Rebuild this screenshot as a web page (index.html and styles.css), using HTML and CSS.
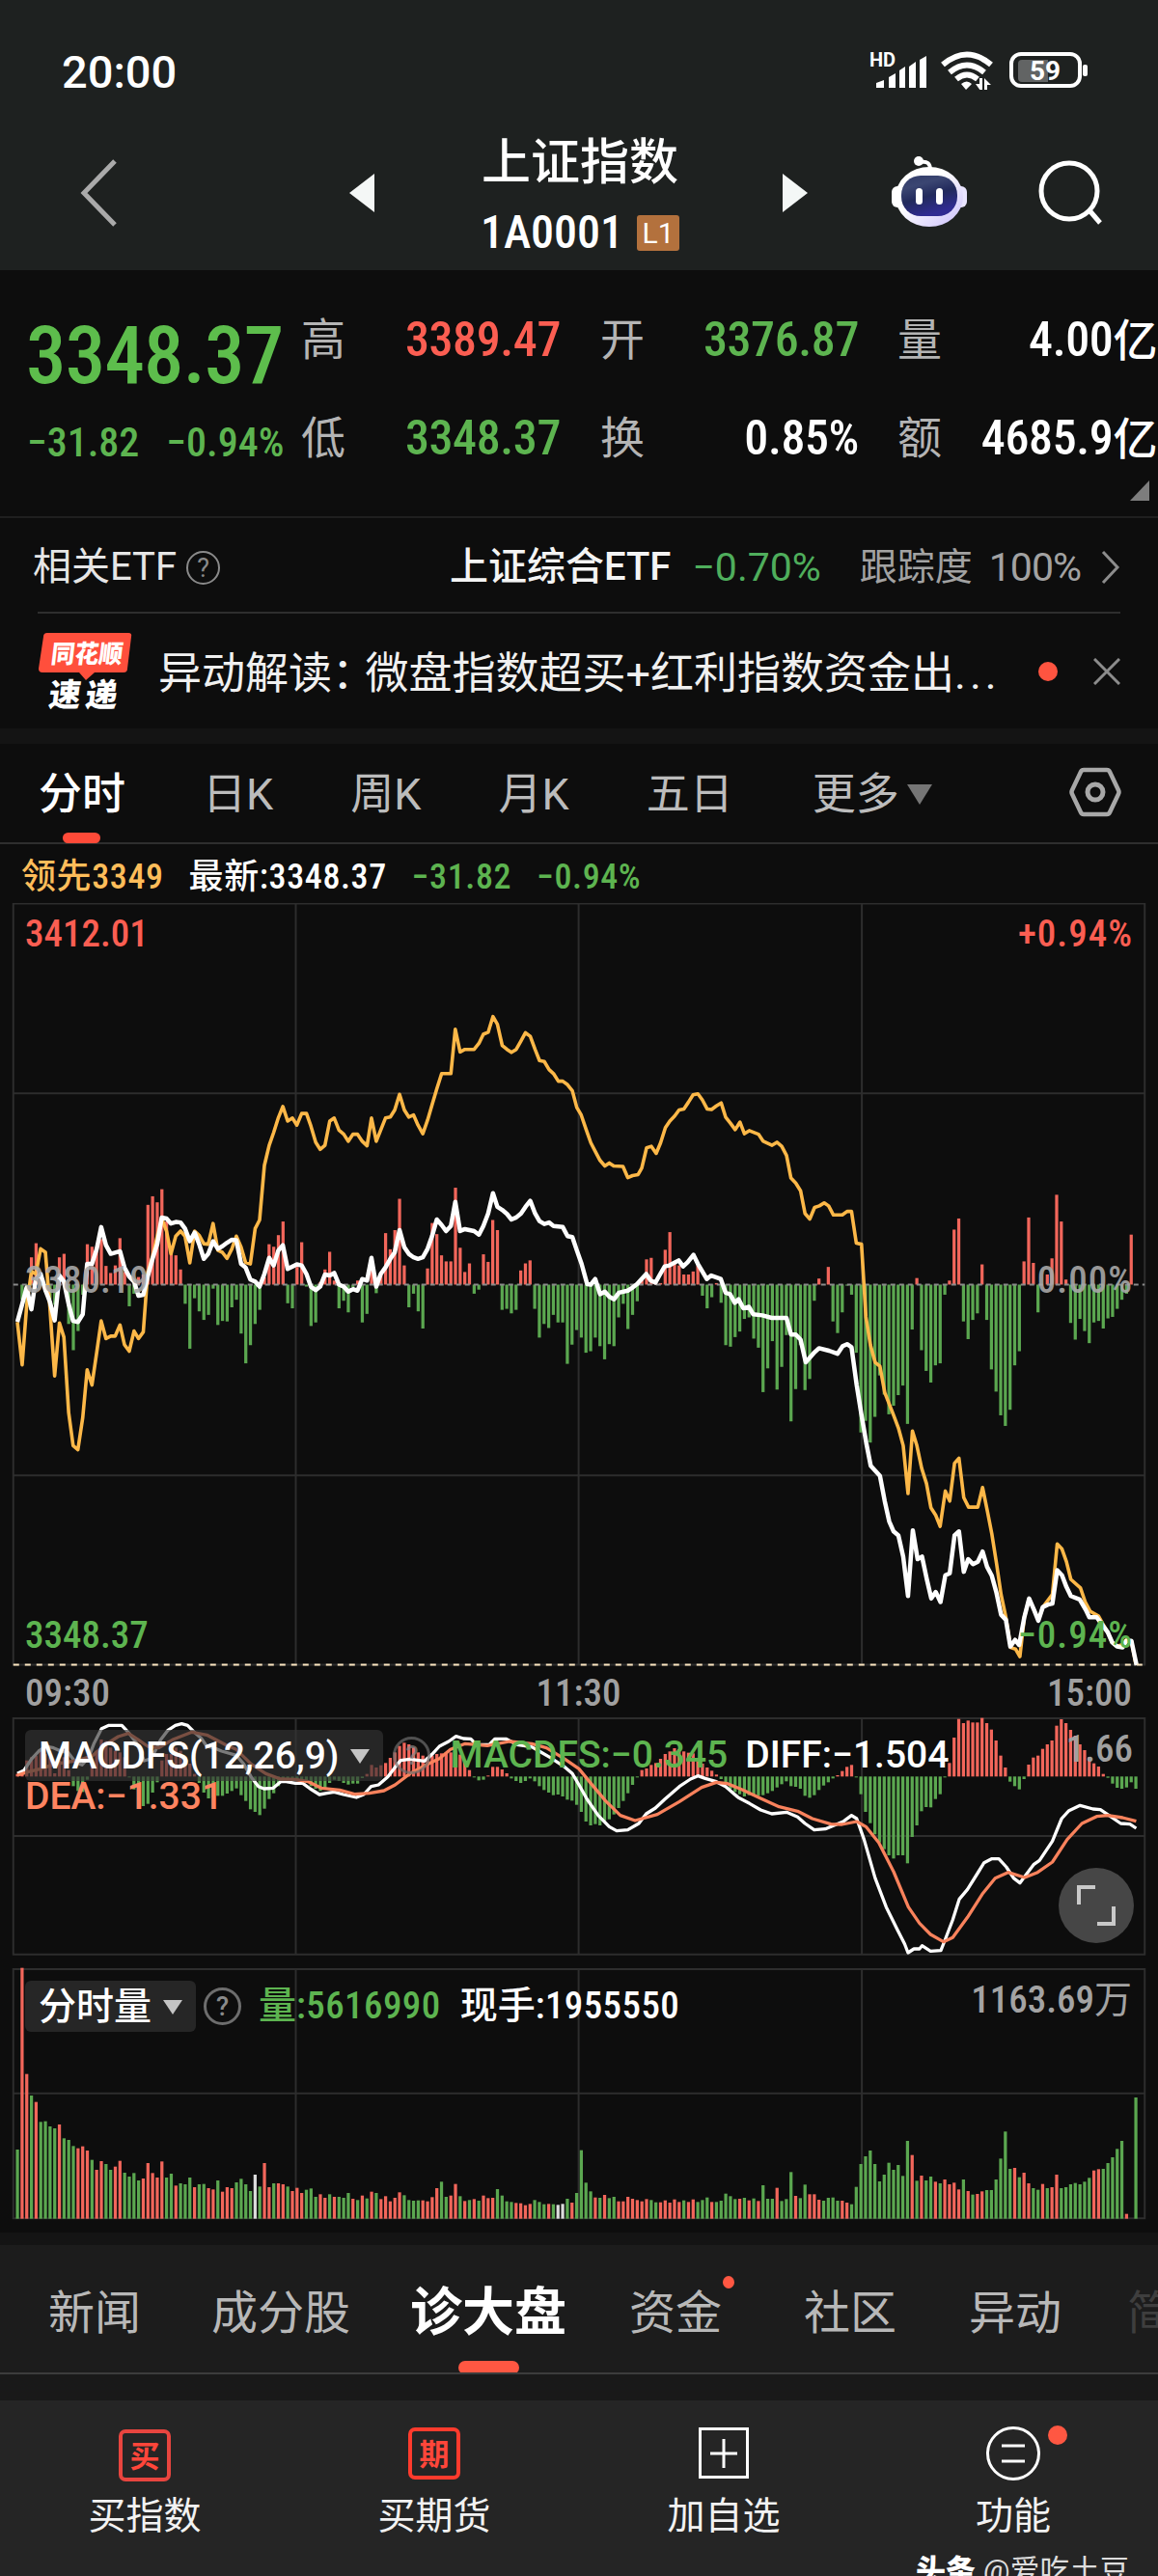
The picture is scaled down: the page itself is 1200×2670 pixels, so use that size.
FILE: index.html
```html
<!DOCTYPE html>
<html lang="zh-CN">
<head>
    <meta charset="UTF-8">
    <meta name="viewport" content="width=device-width, initial-scale=1.0">
    <title>上证指数 1A0001</title>
    <link rel="stylesheet" href="styles.css">
</head>
<body>
    <div class="top">
        <div class="status">
            <span class="clock">20:00</span>
            <svg class="status-icons" width="240" height="50" viewBox="0 0 240 50">
                <text x="11" y="26" class="hd">HD</text>
                <g fill="#fff">
                    <path d="M18 49v-5l8-3v8zM31 49V38l7-4v15zM42 49V31l6-4v22zM52 49V27l7-5v27zM63 49V20l7-4v33z" transform="translate(0 -1)"/>
                </g>
                <g fill="none" stroke="#fff" stroke-width="6">
                    <path d="M87 24Q112 3 137 24"/>
                    <path d="M94 32Q112 17 130 32"/>
                    <path d="M101 39Q112 30 123 39"/>
                </g>
                <path d="M106 44q6-5 11 0l-6 6zM121 44h4v-6h3v13h-2zM130 38l7 7h-4v5h-3z" fill="#fff"/>
                <rect x="158" y="13" width="71" height="33" rx="10" fill="none" stroke="#fff" stroke-width="4"/>
                <path d="M169 19h27v23h-27q-4 0-4-4V23q0-4 4-4z" fill="#626464"/>
                <rect x="232" y="24" width="5" height="12" rx="2" fill="#fff"/>
                <text x="193" y="40" class="battery-text" text-anchor="middle">59</text>
            </svg>
        </div>
        <div class="header">
            <svg class="back" width="40" height="70" viewBox="0 0 40 70"><path d="M36 2L4 35l32 33" fill="none" stroke="#aaa" stroke-width="5"/></svg>
            <svg class="prev" width="26" height="40" viewBox="0 0 26 40"><path d="M26 0v40L0 20z" fill="#f4f7f6"/></svg>
            <div class="title">
                <div class="title-name">上证指数</div>
                <div class="title-code"><span class="num">1A0001</span><span class="badge">L1</span></div>
            </div>
            <svg class="next" width="26" height="40" viewBox="0 0 26 40"><path d="M0 0v40l26-20z" fill="#f4f7f6"/></svg>
            <svg class="robot" width="80" height="76" viewBox="0 0 80 76">
                <defs>
                    <linearGradient id="shell" x1="0" y1="0" x2="1" y2="1"><stop offset=".4" stop-color="#fff"/><stop offset="1" stop-color="#c9bdfb"/></linearGradient>
                    <linearGradient id="face" x1="0" y1="0" x2=".4" y2="1"><stop offset="0" stop-color="#303a68"/><stop offset=".3" stop-color="#3b4672"/><stop offset=".6" stop-color="#222a5c"/><stop offset="1" stop-color="#302b92"/></linearGradient>
                </defs>
                <circle cx="28" cy="7" r="5" fill="#fff"/>
                <path d="M30 8q10-2 10 8" fill="none" stroke="#fff" stroke-width="4"/>
                <rect x="0" y="33" width="14" height="22" rx="6" fill="#fff"/>
                <rect x="64" y="33" width="14" height="22" rx="6" fill="#e9e4ff"/>
                <ellipse cx="39" cy="44" rx="35" ry="31" fill="url(#shell)"/>
                <rect x="10" y="22" width="58" height="42" rx="20" fill="url(#face)"/>
                <rect x="25" y="35" width="7" height="17" rx="3.500" fill="#fff"/>
                <rect x="46" y="35" width="7" height="17" rx="3.500" fill="#fff"/>
            </svg>
            <svg class="search" width="68" height="68" viewBox="0 0 68 68"><circle cx="32" cy="32" r="29" fill="none" stroke="#fff" stroke-width="5"/><path d="M52 51l12 14" stroke="#fff" stroke-width="5"/></svg>
        </div>
    </div>

    <div class="quote">
        <div class="quote-main">
            <div class="price num">3348.37</div>
            <div class="change num"><span>−31.82</span><span>−0.94%</span></div>
        </div>
        <div class="quote-grid">
            <span class="key">高</span><span class="val num red">3389.47</span>
            <span class="key">开</span><span class="val num green">3376.87</span>
            <span class="key">量</span><span class="val num">4.00<i>亿</i></span>
            <span class="key">低</span><span class="val num green">3348.37</span>
            <span class="key">换</span><span class="val num">0.85%</span>
            <span class="key">额</span><span class="val num">4685.9<i>亿</i></span>
        </div>
        <svg class="corner" width="20" height="21" viewBox="0 0 20 21"><path d="M20 0v21H0z" fill="#7d7d7d"/></svg>
    </div>

    <div class="etf">
        <span class="etf-label">相关ETF</span>
        <span class="help">?</span>
        <span class="etf-name">上证综合ETF</span>
        <span class="etf-change">−0.70%</span>
        <span class="etf-track">跟踪度</span>
        <span class="etf-pct">100%</span>
        <svg width="20" height="36" viewBox="0 0 20 36"><path d="M2 2l15 16L2 34" fill="none" stroke="#8c8c8c" stroke-width="3"/></svg>
    </div>

    <div class="news">
        <svg class="news-logo" width="100" height="82" viewBox="0 0 100 82">
            <path d="M9 1h84q4 0 3 4l-4 33q0 4-4 4H58l-9 8-7-8H4q-4 0-4-4L5 5q0-4 4-4z" fill="#ff4f3c"/>
            <text x="16" y="32" class="logo-text" textLength="74" lengthAdjust="spacingAndGlyphs" transform="skewX(-7)">同花顺</text>
            <text x="19" y="77" class="logo-text logo-sub" textLength="71" transform="skewX(-7)">速递</text>
        </svg>
        <span class="news-text">异动解读<span class="colon">：</span>微盘指数超买+红利指数资金出<span class="ellipsis">...</span></span>
        <span class="news-dot"></span>
        <svg width="28" height="28" viewBox="0 0 28 28"><path d="M1 1l26 26M27 1L1 27" stroke="#8c8c8c" stroke-width="3"/></svg>
    </div>

    <div class="periods">
        <span class="active">分时</span>
        <span>日K</span>
        <span>周K</span>
        <span>月K</span>
        <span>五日</span>
        <span class="more">更多</span>
        <svg class="more-arrow" width="26" height="21" viewBox="0 0 26 21"><path d="M0 0h26L13 21z" fill="#757575"/></svg>
        <svg class="settings" width="54" height="52" viewBox="0 0 54 52"><path d="M15 3h24q2 0 3 2l9 19q1 2 0 4l-9 19q-1 2-3 2H15q-2 0-3-2L3 28q-1-2 0-4l9-19q1-2 3-2z" fill="none" stroke="#a8a8a8" stroke-width="4.500"/><circle cx="27" cy="26" r="8" fill="none" stroke="#a8a8a8" stroke-width="5"/></svg>
    </div>

    <div class="legend num">
        <span class="orange">领先3349</span>
        <span>最新:3348.37</span>
        <span class="green">−31.82</span>
        <span class="green">−0.94%</span>
    </div>

    <div class="chart price-chart">
        <svg id="priceChart" width="1200" height="792" viewBox="0 30 3136 1514" preserveAspectRatio="none"></svg>
        <span class="lab tl num red">3412.01</span>
        <span class="lab tr num red">+0.94%</span>
        <span class="lab ml num">3380.19</span>
        <span class="lab mr num">0.00%</span>
        <span class="lab bl num green">3348.37</span>
        <span class="lab br num green">−0.94%</span>
    </div>
    <div class="times num"><span>09:30</span><span>11:30</span><span>15:00</span></div>

    <div class="chart macd-chart">
        <svg id="macdChart" width="1200" height="248" viewBox="0 240 3136 744" preserveAspectRatio="none"></svg>
        <div class="macd-head">
            <span class="picker">MACDFS(12,26,9)<i class="caret"></i></span>
            <span class="help dim">?</span>
            <span class="macd-val green">MACDFS:−0.345</span>
            <span class="macd-diff">DIFF:−1.504</span>
        </div>
        <span class="dea">DEA:−1.331</span>
        <span class="macd-max num">1.66</span>
        <span class="expand"><svg width="40" height="42" viewBox="0 0 40 42"><path d="M2 20V2h17M38 22v18H21" fill="none" stroke="#c9c9c9" stroke-width="4"/></svg></span>
    </div>

    <div class="chart vol-chart">
        <svg id="volChart" width="1200" height="266" viewBox="0 24 3136 798" preserveAspectRatio="none"></svg>
        <div class="vol-head">
            <span class="picker">分时量<i class="caret"></i></span>
            <span class="help">?</span>
            <span class="vol-val green">量:<b class="num">5616990</b></span>
            <span class="vol-hand">现手:<b class="num">1955550</b></span>
        </div>
        <span class="vol-max num">1163.69<i>万</i></span>
    </div>

    <div class="tabs">
        <span>新闻</span>
        <span>成分股</span>
        <span class="active">诊大盘</span>
        <span class="dotted">资金</span>
        <span class="social">社区</span>
        <span class="moves">异动</span>
        <span class="faded">简</span>
    </div>

    <div class="bottom">
        <div class="action">
            <svg width="60" height="60" viewBox="0 0 60 60"><rect x="5" y="7" width="50" height="50" rx="5" fill="none" stroke="#e8453f" stroke-width="4"/><text x="30" y="44" text-anchor="middle" class="action-char">买</text></svg>
            <span>买指数</span>
        </div>
        <div class="action">
            <svg width="60" height="60" viewBox="0 0 60 60"><rect x="5" y="5" width="50" height="50" rx="5" fill="none" stroke="#ff3b2d" stroke-width="4"/><text x="30" y="42" text-anchor="middle" class="action-char">期</text></svg>
            <span>买期货</span>
        </div>
        <div class="action">
            <svg width="60" height="60" viewBox="0 0 60 60"><path d="M5.500 4.500h49v50h-49zM30 15v30M16 30h28" fill="none" stroke="#fff" stroke-width="3"/></svg>
            <span>加自选</span>
        </div>
        <div class="action menu">
            <svg width="60" height="60" viewBox="0 0 60 60"><circle cx="30" cy="30" r="26.500" fill="none" stroke="#fff" stroke-width="3"/><path d="M18 22h24M18 38h24" stroke="#fff" stroke-width="3"/></svg>
            <span>功能</span>
        </div>
        <div class="author"><b>头条</b> @爱吃土豆</div>
    </div>

    <script src="script.js"></script>
</body>
</html>
```

FILE: styles.css
```css
* {
    box-sizing: border-box;
}
body {
    margin: 0;
    width: 1200px;
    height: 2670px;
    overflow: hidden;
    background-color: #0d0d0d;
    color: #fff;
    font-family: Roboto, "Noto Sans CJK SC", sans-serif;
    font-size: 39px;
    line-height: 1;
    white-space: nowrap;
}
svg {
    display: block;
    flex: none;
}
i {
    font-style: normal;
}
b {
    font-weight: inherit;
}
.num {
    font-stretch: 87%;
    font-weight: 500;
}
.red {
    color: #fb5e52;
}
.green {
    color: #5db450;
}
.orange {
    color: #fdbd5a;
}

/* status bar and title */
.top {
    height: 280px;
    background-color: #1e2120;
}
.status {
    height: 120px;
    padding: 45px 60px 0 64px;
    display: flex;
    justify-content: space-between;
}
.clock {
    font-size: 47px;
    font-weight: 500;
    line-height: 60px;
}
.status-icons {
    margin: -2px 10px 0 0;
}
.hd {
    font-size: 20px;
    font-weight: 700;
    fill: #fff;
}
.battery-text {
    font-size: 28px;
    font-weight: 700;
    fill: #fff;
}
.header {
    height: 160px;
    padding: 0 59px 0 83px;
    display: flex;
    align-items: center;
}
.prev {
    margin-left: 239px;
}
.title {
    width: 200px;
    margin: 0 110px 0 113px;
    padding-top: 10px;
    display: flex;
    flex-direction: column;
    align-items: center;
}
.title-name {
    font-size: 51px;
    font-weight: 500;
    line-height: 72px;
}
.title-code {
    display: flex;
    align-items: center;
    font-size: 48px;
    line-height: 72px;
}
.badge {
    margin-left: 14px;
    width: 44px;
    height: 37px;
    border-radius: 3px;
    background-color: #b3713d;
    font-size: 30px;
    line-height: 38px;
    text-align: center;
}
.next {
    margin-right: 87px;
}
.robot {
    margin: -4px 73px 0 0;
}
.search {
    margin-left: -1px;
}

/* quote */
.quote {
    position: relative;
    height: 257px;
    padding-left: 28px;
    display: flex;
    border-bottom: 2px solid #1f1f1f;
}
.quote-main {
    width: 282px;
}
.price {
    margin: 44px 0 0 -1px;
    font-size: 83px;
    letter-spacing: -.8px;
    line-height: 90px;
    color: #5dbd4c;
}
.change {
    margin-top: 21px;
    display: flex;
    gap: 28px;
    font-size: 42px;
    line-height: 48px;
    color: #5db450;
}
.quote-grid {
    height: 204px;
    padding-top: 21px;
    display: grid;
    grid-template-columns: 48px 223px 87px 222px 86px 223px;
    grid-template-rows: 102px 102px;
    align-items: center;
}
.key {
    font-size: 46px;
    color: #b4b4b4;
    text-align: right;
}
.val {
    font-size: 50px;
    letter-spacing: -.4px;
    text-align: right;
}
.val i {
    font-size: 46px;
}
.corner {
    position: absolute;
    right: 9px;
    bottom: 16px;
}

/* related etf */
.etf {
    height: 99px;
    margin: 0 39px;
    padding-top: 5px;
    display: flex;
    align-items: center;
    border-bottom: 2px solid #2e2e2e;
    color: #e6e6e6;
}
.etf-label {
    margin-left: -5px;
    font-size: 40px;
}
.help {
    width: 35px;
    height: 35px;
    margin-left: 10px;
    border: 2px solid #8a8a8a;
    border-radius: 50%;
    color: #8a8a8a;
    font-size: 27px;
    line-height: 32px;
    text-align: center;
}
.etf-name {
    margin-left: auto;
    font-size: 40px;
    font-weight: 500;
    color: #f4f4f4;
}
.etf-change {
    margin-left: 22px;
    font-size: 41px;
    color: #4fae5c;
}
.etf-track {
    margin-left: 40px;
    color: #a2a2a2;
}
.etf-pct {
    margin: 0 21px 0 17px;
    font-size: 41px;
    letter-spacing: -1px;
    color: #a2a2a2;
}

/* news */
.news {
    height: 119px;
    padding: 0 39px 0 40px;
    display: flex;
    align-items: center;
}
.logo-text {
    font-family: "Noto Sans CJK SC", sans-serif;
    font-size: 26px;
    font-weight: 900;
    fill: #fff;
}
.logo-sub {
    font-size: 33px;
}
.news-text {
    margin-left: 24px;
    padding-top: 5px;
    font-size: 45px;
    color: #f0f0f0;
}
.colon {
    margin-right: 12px;
    font-feature-settings: "halt";
}
.ellipsis {
    letter-spacing: 4px;
}
.news-dot {
    width: 20px;
    height: 20px;
    margin: 0 37px 0 auto;
    border-radius: 50%;
    background-color: #ff5440;
}

/* period tabs */
.periods {
    height: 120px;
    padding: 2px 38px 0 40px;
    border-top: 16px solid #141414;
    border-bottom: 2px solid #2e2e2e;
    display: flex;
    align-items: center;
    font-size: 45px;
    color: #bcbcbc;
}
.periods span + span {
    margin-left: 80px;
}
.periods span.more {
    margin-left: 82px;
}
.periods .active {
    position: relative;
    color: #fff;
    font-weight: 500;
}
.periods .active::after {
    content: "";
    position: absolute;
    left: 25px;
    top: 62px;
    width: 39px;
    height: 11px;
    border-radius: 6px;
    background-color: #ff4a38;
}
.more-arrow {
    margin-left: 8px;
}
.settings {
    margin: -4px 0 0 auto;
}
.legend {
    height: 61px;
    padding: 6px 0 0 22px;
    display: flex;
    align-items: center;
    gap: 26px;
    font-size: 36px;
    letter-spacing: .6px;
}

/* charts */
.chart {
    position: relative;
}
.price-chart {
    height: 792px;
}
.grid {
    stroke: #2d2d2d;
    stroke-width: 2;
    fill: none;
}
.line {
    fill: none;
    stroke-linejoin: round;
}
.grid, .line {
    vector-effect: non-scaling-stroke;
}
.lab {
    position: absolute;
    line-height: 40px;
}
.tl, .tr {
    top: 12px;
}
.ml, .mr {
    top: 371px;
    color: #a8a8a8;
    opacity: .9;
}
.bl, .br {
    top: 739px;
}
.tl, .ml, .bl {
    left: 26px;
}
.tr, .mr, .br {
    right: 26px;
    letter-spacing: 1px;
}
.times {
    height: 52px;
    padding: 2px 27px 0 26px;
    display: flex;
    justify-content: space-between;
    align-items: center;
    color: #a0a0a0;
}
.macd-chart {
    height: 258px;
}
.macd-head, .vol-head {
    position: absolute;
    left: 26px;
    display: flex;
    align-items: center;
    font-weight: 500;
}
.macd-head {
    top: 13px;
}
.vol-head {
    top: 15px;
}
.picker {
    height: 53px;
    padding: 2px 14px 0;
    border-radius: 6px;
    background-color: rgba(52, 52, 52, .65);
    display: flex;
    align-items: center;
}
.caret {
    margin-left: 12px;
    border: 10px solid transparent;
    border-top: 15px solid #c4c4c4;
    border-bottom: 0;
}
.help.dim {
    opacity: .7;
}
.macd-head .help, .vol-head .help {
    width: 39px;
    height: 39px;
    margin-left: 8px;
    border-width: 3px;
    border-color: #6d6d6d;
    line-height: 34px;
}
.macd-head .help {
    margin-left: 10px;
}
.macd-val {
    margin-left: 20px;
}
.macd-diff {
    margin-left: 18px;
}
.dea {
    position: absolute;
    left: 26px;
    top: 63px;
    color: #ff8460;
    font-weight: 500;
}
.macd-max {
    position: absolute;
    right: 26px;
    top: 14px;
    color: #a0a0a0;
}
.expand {
    position: absolute;
    right: 25px;
    top: 156px;
    width: 78px;
    height: 78px;
    border-radius: 50%;
    background-color: #464646;
    display: flex;
    align-items: center;
    justify-content: center;
}
.vol-chart {
    height: 276px;
}
.vol-val {
    margin-left: 18px;
}
.vol-hand {
    margin-left: 20px;
}
.vol-val .num, .vol-hand .num {
    letter-spacing: .4px;
}
.vol-max {
    position: absolute;
    right: 27px;
    top: 16px;
    color: #a3a3a3;
}
.vol-max i {
    font-weight: 400;
}

/* bottom tabs */
.tabs {
    height: 147px;
    padding: 9px 0 0 50px;
    border-top: 13px solid #141414;
    border-bottom: 2px solid #3c3c3c;
    background-color: #1c1c1c;
    display: flex;
    align-items: center;
    overflow: hidden;
    font-size: 48px;
    color: #b8b8b8;
}
.tabs span {
    margin-right: 73px;
}
.tabs .active {
    position: relative;
    margin-left: -11px;
    margin-right: 65px;
    font-size: 54px;
    font-weight: 700;
    color: #fff;
}
.tabs .active::after {
    content: "";
    position: absolute;
    left: 50px;
    top: 76px;
    width: 63px;
    height: 14px;
    border-radius: 7px;
    background-color: #ff5742;
}
.tabs .dotted {
    position: relative;
    margin-right: 85px;
}
.dotted::after {
    content: "";
    position: absolute;
    right: -13px;
    top: -15px;
    width: 12px;
    height: 13px;
    border-radius: 50%;
    background-color: #ff5742;
}
.tabs .social {
    margin-right: 75px;
}
.tabs .moves {
    margin-right: 68px;
}
.tabs .faded {
    margin-right: 0;
    color: #3e3e3e;
}
.bottom {
    position: relative;
    height: 209px;
    padding-top: 25px;
    border-top: 27px solid #191919;
    background-color: #252525;
    display: grid;
    grid-template-columns: repeat(4, 1fr);
}
.action {
    position: relative;
    display: flex;
    flex-direction: column;
    align-items: center;
    color: #f2f2f2;
}
.action span {
    margin-top: 16px;
}
.action-char {
    font-family: "Noto Sans CJK SC", sans-serif;
    font-size: 31px;
    font-weight: 700;
    fill: #ff463a;
}
.menu::after {
    content: "";
    position: absolute;
    right: 94px;
    top: 1px;
    width: 20px;
    height: 20px;
    border-radius: 50%;
    background-color: #ff5742;
}
.author {
    position: absolute;
    left: 949px;
    top: 161px;
    font-size: 31px;
    color: #ddd;
}
.author b {
    font-weight: 900;
    color: #fff;
}
```

FILE: script.js
```javascript
// one value per minute, 241 slots across the session
const X0 = 47;
const STEP = 12.62;
const RED = '#f2665b';
const GREEN = '#5ba750';

const strength = [0,-30,-45,54,82,20,-15,-30,-40,54,61,-78,-130,-92,-20,80,75,75,90,37,23,38,92,25,-43,-18,15,20,158,175,
    163,189,125,70,58,30,-38,-127,-27,-53,-70,-60,-8,-80,-72,-73,-45,-30,-97,-156,-120,-78,-50,15,80,75,98,125,-37,-47,
    35,84,-4,-82,-75,5,30,65,8,-47,-32,-55,-5,8,-75,-58,30,-17,25,102,70,108,170,38,-45,-18,-53,-87,32,122,
    100,58,46,46,192,73,25,42,-18,-10,60,45,128,108,-50,-48,-57,-50,28,42,48,-48,-105,-78,-86,-60,-75,-75,-157,-119,
    -90,-105,-135,-132,-105,-122,-148,-118,-122,-65,-38,-88,-60,-33,10,50,53,8,3,69,104,45,38,20,20,26,38,-22,-47,-25,
    3,-36,-120,-123,-104,-93,-68,-65,-107,-125,-213,-166,-112,-208,-163,-100,-271,-207,-120,-209,-187,-32,12,0,35,-73,-96,-55,-2,-20,
    -135,-293,-270,-313,-262,-180,-218,-257,-240,-219,-200,-276,-89,13,-130,-171,-194,-160,-156,-20,8,109,131,-73,-108,-70,-57,40,-70,-168,
    -212,-259,-280,-248,-160,-132,46,133,43,-55,0,20,52,178,125,10,-76,-109,-68,-92,-116,-75,-72,-87,-67,-64,-48,-30,-18,99,0];

const macd = [8,15,50,60,65,80,70,60,10,50,60,20,-30,-45,-48,-10,50,80,115,110,90,80,75,60,-3,-40,-72,-92,-85,-50,
    -18,50,70,70,90,80,60,40,8,-20,-50,-68,-65,-60,-60,-53,-45,-37,-58,-76,-102,-110,-120,-100,-70,-52,-30,-15,-12,-14,
    -12,-13,-20,-30,-38,-45,-35,-20,-10,-14,-20,-25,-22,-22,-5,8,36,28,35,42,58,75,95,105,100,90,75,65,60,65,
    70,72,74,75,80,68,45,20,-3,-12,-10,3,30,30,22,10,-6,-14,-20,-14,-6,-15,-30,-42,-50,-58,-56,-62,-72,-75,
    -88,-110,-140,-152,-148,-152,-138,-133,-118,-98,-76,-52,-26,-3,20,25,36,42,55,70,78,88,85,78,74,72,48,40,28,18,
    6,-8,-25,-38,-48,-55,-62,-58,-60,-60,-58,-52,-45,-34,-24,-15,-30,-32,-38,-60,-66,-58,-42,-28,-18,-6,4,17,30,36,
    -3,-55,-110,-145,-180,-205,-226,-245,-255,-245,-245,-270,-188,-152,-108,-95,-96,-70,-55,-3,42,121,179,166,174,168,168,182,166,146,
    112,65,28,-16,-30,-40,-8,37,59,65,86,100,112,158,178,166,145,127,100,82,60,41,31,8,-4,-22,-35,-38,-34,-18,-38];

const volume = ('g215 r780 r450 g383 r363 g301 g303 g287 g281 r293 g250 g245 g226 r219 r225 r212 g183 r152 r179 g170 g152 r162 r180 g143 g131 g142 g119 r125 r173 r142 ' +
    'r128 r178 g128 g140 r103 g110 g107 g128 r98 g107 g108 r95 r91 g119 r84 r98 r95 g113 g124 g107 g86 w137 g100 r173 r98 g110 r110 r107 g100 r86 ' +
    'r96 r80 g90 g94 g68 r76 r65 g76 r68 g68 g65 g80 r62 g58 r72 g63 r84 g80 r61 r70 r54 r65 r82 g73 g58 g56 g57 r57 r54 r67 ' +
    'r95 g115 g68 r72 r108 g70 r55 g58 r61 g56 r72 r64 r65 g92 g72 g54 g52 r49 r48 r42 r46 g58 g52 g45 r46 g45 w43 w46 g62 r50 ' +
    'g80 g213 g112 g85 r66 g65 r74 g64 g68 r54 r54 r68 r62 r58 r54 r61 g58 g51 r51 r57 r50 r60 r52 g57 r52 r60 g52 g58 g66 r52 ' +
    'g52 g56 g78 g70 g61 r62 g65 r57 g63 r55 g104 g62 g62 r96 g55 g61 g145 r71 g64 g106 r76 r76 r59 g56 g65 g66 g56 r56 r50 g45 ' +
    'g99 g170 g194 g212 g170 g116 g137 g174 g152 g167 g133 g242 r198 g118 r134 g119 g131 r115 g110 r122 r107 r112 r91 g122 r86 g75 r77 r85 g89 g89 ' +
    'g122 g187 g271 g155 r158 g129 r143 r110 g95 g90 r108 g95 r98 r137 g95 g98 g107 g111 g107 g115 g127 r150 r154 g155 g173 g191 g217 g242 r15 g0 g377').split(' ');

const leadLine = '47,860 60,945 72,830 85,760 97,765 110,715 123,722 135,830 148,967 161,862 173,890 186,1040 198,1105 211,1113 224,1050 236,955 249,985 262,920 274,858 287,893 300,888 312,888 325,866 337,905 350,918 363,878 375,893 388,880 400,762 413,730 426,690 438,655 451,680 463,725 476,690 489,680 501,690 514,743 527,680 539,688 552,705 564,706 577,665 590,718 602,722 615,734 628,715 640,690 653,712 665,742 678,745 691,675 703,658 716,550 729,510 741,485 754,455 766,433 779,462 792,456 804,470 817,447 830,447 842,472 855,504 867,518 880,510 893,462 905,456 918,480 931,488 943,502 956,488 968,488 981,502 994,511 1006,456 1019,502 1031,480 1044,456 1057,454 1069,440 1082,409 1095,440 1107,454 1120,450 1132,470 1145,487 1158,460 1170,430 1183,398 1196,368 1221,368 1233,280 1246,325 1259,320 1284,320 1297,308 1309,290 1322,286 1335,255 1347,270 1360,312 1373,320 1385,326 1398,320 1411,303 1423,287 1436,294 1449,320 1461,342 1474,344 1487,360 1499,368 1512,383 1524,383 1537,390 1550,402 1562,435 ' +
    '1574,450 1587,478 1600,505 1612,522 1625,540 1638,551 1650,545 1662,551 1687,552 1700,574 1713,570 1728,568 1738,555 1751,515 1764,512 1777,526 1789,505 1802,475 1814,462 1827,452 1839,440 1852,438 1864,425 1877,410 1890,408 1902,420 1915,438 1927,439 1940,432 1953,426 1965,454 1978,466 1991,479 2004,464 2016,487 2029,481 2054,488 2067,502 2091,510 2104,504 2117,512 2130,530 2142,575 2155,585 2168,600 2180,645 2193,656 2206,633 2219,630 2232,624 2244,630 2257,648 2281,648 2294,641 2306,641 2319,704 2333,706 2345,850 2357,905 2370,940 2383,948 2396,1000 2420,1045 2433,1070 2446,1105 2459,1200 2471,1076 2483,1105 2496,1150 2509,1180 2521,1228 2534,1243 2546,1265 2560,1195 2572,1215 2585,1140 2597,1130 2610,1208 2623,1227 2648,1227 2661,1188 2674,1235 2686,1280 2699,1340 2711,1400 2724,1445 2737,1505 2750,1508 2762,1523 2774,1445 2787,1408 2800,1430 2812,1450 2824,1425 2850,1400 2863,1300 2876,1310 2888,1335 2900,1370 2926,1387 2939,1415 2952,1433 2975,1443 2988,1460 3000,1475 3012,1495 3025,1502 3038,1500 3050,1490 3064,1492 3076,1538';

const priceLine = '47,860 60,825 72,792 85,835 97,775 110,765 123,797 135,820 148,857 161,768 173,780 186,825 198,858 211,860 224,845 236,745 249,745 262,715 274,672 287,708 300,725 325,720 337,752 350,770 363,780 375,808 388,806 400,770 413,735 426,705 438,653 451,655 463,665 476,662 489,663 501,675 514,700 527,683 539,705 552,735 564,725 577,700 590,715 602,710 615,703 628,697 640,698 653,745 665,752 678,776 691,780 703,790 716,765 729,733 741,748 754,718 766,708 779,755 804,746 817,748 830,765 842,790 855,797 867,790 880,766 893,768 905,763 918,786 931,790 943,800 956,795 968,798 981,775 994,778 1006,733 1019,790 1031,765 1044,752 1057,735 1069,722 1082,678 1095,712 1107,725 1120,732 1132,735 1145,732 1158,715 1170,690 1183,657 1196,668 1208,680 1221,670 1233,622 1246,680 1259,676 1284,680 1297,687 1309,670 1322,645 1335,605 1347,632 1360,638 1373,646 1385,657 1398,653 1411,645 1423,632 1436,620 1449,645 1461,660 1474,666 1487,663 1499,670 1524,672 1537,690 1550,692 1562,718 ' +
    '1575,745 1590,785 1600,786 1612,775 1625,805 1638,800 1650,810 1663,815 1676,802 1700,798 1713,792 1725,785 1750,765 1762,778 1775,782 1788,765 1800,750 1813,748 1838,738 1850,750 1862,742 1878,727 1890,745 1902,760 1914,775 1926,768 1952,775 1965,802 1977,805 1990,822 2000,815 2013,833 2028,830 2040,845 2065,847 2090,852 2130,852 2142,885 2155,885 2168,895 2182,940 2194,930 2206,920 2218,912 2245,917 2268,923 2282,908 2294,904 2306,910 2320,985 2332,1040 2346,1100 2358,1145 2383,1165 2396,1215 2408,1255 2420,1275 2433,1283 2446,1325 2459,1403 2472,1273 2485,1330 2497,1325 2510,1370 2522,1408 2534,1395 2547,1415 2560,1362 2572,1358 2585,1283 2597,1275 2610,1355 2622,1330 2635,1340 2648,1335 2661,1315 2673,1345 2686,1363 2698,1395 2711,1440 2724,1450 2736,1503 2749,1490 2760,1500 2774,1445 2787,1408 2800,1430 2812,1452 2824,1425 2838,1420 2850,1418 2863,1352 2876,1362 2888,1385 2900,1403 2924,1410 2940,1430 2950,1445 2970,1445 2985,1460 3000,1475 3012,1495 3025,1503 3040,1505 3050,1492 3064,1492 3078,1540';

const diffLine = '47,415 65,405 85,370 105,345 125,330 145,335 165,345 185,350 205,380 222,388 240,365 255,320 275,275 295,265 330,265 350,290 370,320 390,375 405,370 420,345 435,310 455,280 475,265 492,260 508,265 525,285 545,305 560,330 580,335 600,345 640,358 660,385 680,425 700,455 715,462 740,460 760,440 775,440 800,445 820,445 840,462 865,480 885,476 905,472 930,480 965,489 985,480 1005,455 1025,450 1050,425 1070,395 1085,374 1110,370 1150,376 1170,355 1190,330 1215,315 1235,299 1255,306 1275,307 1290,325 1325,325 1340,307 1370,307 1400,325 1440,332 1460,345 1490,365 1530,395 1550,415 1568,450 1590,495 1620,545 1650,580 1670,593 1700,590 1730,570 1750,540 1775,522 1800,495 1840,455 1870,432 1890,422 1910,430 1940,440 1965,455 2000,490 2030,508 2060,528 2090,540 2130,535 2160,550 2180,570 2205,590 2235,587 2265,573 2285,563 2306,545 2320,555 2340,620 2370,740 2400,830 2430,900 2450,945 2459,972 2475,960 2490,960 2497,950 2520,967 2548,965 2560,930 2580,870 2598,805 2620,775 2650,720 2665,692 2685,680 2705,680 2725,705 2745,740 2762,755 2775,735 2800,697 2815,685 2850,625 2875,555 2895,530 2925,514 2960,525 2980,527 3010,550 3035,570 3060,572 3077,585';

const deaLine = '47,420 75,410 110,400 150,385 205,375 250,360 285,325 320,300 348,290 375,310 400,330 430,335 470,308 520,286 560,295 610,325 640,340 680,385 720,415 760,432 800,433 835,440 870,460 920,466 960,479 1000,476 1040,468 1070,450 1110,415 1150,390 1190,368 1220,340 1260,322 1320,328 1380,315 1440,322 1480,335 1530,370 1568,400 1600,445 1640,500 1680,545 1720,561 1780,542 1840,502 1900,458 1940,442 1970,446 2010,465 2060,492 2110,518 2160,532 2200,555 2250,572 2280,573 2320,564 2345,580 2380,630 2420,720 2460,830 2490,880 2520,915 2555,938 2580,925 2620,862 2660,790 2695,740 2730,722 2775,738 2810,722 2850,690 2890,620 2930,570 2970,548 3000,545 3040,552 3077,563';

function grid(top, bottom, rows) {
    let d = `M36 ${top}H3100V${bottom}H36Z`;
    [801, 1567, 2334].forEach((x) => {
        d += `M${x} ${top}V${bottom}`;
    });
    rows.forEach((y) => {
        d += `M36 ${y}H3100`;
    });
    return `<path class="grid" d="${d}"/>`;
}

function bar(i, y, height, color) {
    return `<rect x="${(X0 + i * STEP - 4).toFixed(1)}" y="${y}" width="8.500" height="${height}" fill="${color}"/>`;
}

function bars(values, zero) {
    return values.map((v, i) => bar(i, v > 0 ? zero - v : zero, Math.abs(v), v > 0 ? RED : GREEN)).join('');
}

function line(points, color, width) {
    return `<polyline class="line" points="${points}" stroke="${color}" stroke-width="${width}"/>`;
}

function dashes(y, color, pattern) {
    return `<path class="line" d="M36 ${y}H3100" stroke="${color}" stroke-width="2" stroke-dasharray="${pattern}"/>`;
}

document.getElementById('priceChart').innerHTML =
    grid(31, 1539, [407, 1164]) +
    bars(strength, 786) +
    dashes(786, '#8a8a8a', '5 4') +
    line(leadLine, '#fdb848', 3.6) +
    line(priceLine, '#fff', 4.5) +
    dashes(1539, '#fbe6c0', '6 6');

document.getElementById('macdChart').innerHTML =
    grid(243, 977, [609]) +
    bars(macd, 424) +
    line(diffLine, '#fff', 3.3) +
    line(deaLine, '#f9825c', 3.3);

document.getElementById('volChart').innerHTML =
    grid(33, 808, [419]) +
    volume.map((v, i) => {
        const h = Number(v.slice(1));
        const color = { r: RED, g: GREEN, w: '#dcdcdc' }[v[0]];
        return bar(i, 809 - h, h, color);
    }).join('');
```
